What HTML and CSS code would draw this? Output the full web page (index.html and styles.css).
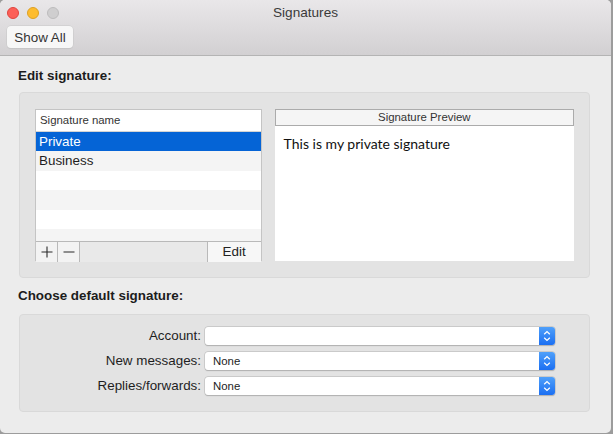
FILE: index.html
```html
<!DOCTYPE html>
<html>
<head>
<meta charset="utf-8">
<link rel="stylesheet" href="styles.css">
</head>
<body>
<div class="window">
  <div class="titlebar">
    <div class="titlerow">
      <div class="lights">
        <span class="light red"></span>
        <span class="light yellow"></span>
        <span class="light gray"></span>
      </div>
      <div class="title">Signatures</div>
    </div>
    <div class="toolbar">
      <button class="showall">Show All</button>
    </div>
  </div>
  <div class="content">
    <div class="heading">Edit signature:</div>
    <div class="group group-edit">
      <div class="table">
        <div class="thead">Signature name</div>
        <div class="rows">
          <div class="row selected">Private</div>
          <div class="row alt">Business</div>
          <div class="row"></div>
          <div class="row alt"></div>
          <div class="row"></div>
          <div class="row alt short"></div>
        </div>
        <div class="tfoot">
          <div class="sqbtn"><svg width="14" height="14" viewBox="0 0 14 14"><path d="M7 1.5V12.5M1.5 7H12.5" stroke="#2a2a2a" stroke-width="1.1" fill="none"/></svg></div>
          <div class="sqbtn"><svg width="14" height="14" viewBox="0 0 14 14"><path d="M1.5 7H12.5" stroke="#2a2a2a" stroke-width="1.1" fill="none"/></svg></div>
          <div class="spacer"></div>
          <div class="editbtn">Edit</div>
        </div>
      </div>
      <div class="preview">
        <div class="phead">Signature Preview</div>
        <div class="pbody">This is my private signature</div>
      </div>
    </div>
    <div class="heading heading2">Choose default signature:</div>
    <div class="group group-default">
      <div class="formrow">
        <div class="label">Account:</div>
        <div class="popup"><span class="pval"></span><span class="stepper"><svg width="16" height="18" viewBox="0 0 16 18"><path d="M5.2 7.2L8 4.6L10.8 7.2M5.2 10.8L8 13.4L10.8 10.8" stroke="#fff" stroke-width="1.3" fill="none"/></svg></span></div>
      </div>
      <div class="formrow">
        <div class="label">New messages:</div>
        <div class="popup"><span class="pval">None</span><span class="stepper"><svg width="16" height="18" viewBox="0 0 16 18"><path d="M5.2 7.2L8 4.6L10.8 7.2M5.2 10.8L8 13.4L10.8 10.8" stroke="#fff" stroke-width="1.3" fill="none"/></svg></span></div>
      </div>
      <div class="formrow">
        <div class="label">Replies/forwards:</div>
        <div class="popup"><span class="pval">None</span><span class="stepper"><svg width="16" height="18" viewBox="0 0 16 18"><path d="M5.2 7.2L8 4.6L10.8 7.2M5.2 10.8L8 13.4L10.8 10.8" stroke="#fff" stroke-width="1.3" fill="none"/></svg></span></div>
      </div>
    </div>
  </div>
</div>
</body>
</html>
```
FILE: styles.css
```css
* { box-sizing: border-box; }
html, body { margin: 0; padding: 0; }
body {
  background: #9c9c9c;
  width: 613px;
  height: 434px;
  overflow: hidden;
  font-family: "Liberation Sans", Arial, sans-serif;
  color: #222;
}
.window {
  width: 611px;
  height: 433px;
  background: #ececec;
  border-radius: 5px;
  overflow: hidden;
  display: flex;
  flex-direction: column;
}
.titlebar {
  height: 56px;
  background: linear-gradient(#e9e7e9, #d2d0d2);
  border-bottom: 1px solid #b4b4b4;
  display: flex;
  flex-direction: column;
}
.titlerow {
  height: 25px;
  display: flex;
  align-items: center;
  position: relative;
}
.lights {
  display: flex;
  gap: 8px;
  padding-left: 7px;
}
.light {
  width: 12px;
  height: 12px;
  border-radius: 50%;
  display: block;
}
.red { background: #fc5f57; border: 1px solid #e0443e; }
.yellow { background: #fdbc2e; border: 1px solid #dea123; }
.gray { background: #cfcecf; border: 1px solid #bdbcbd; }
.title {
  position: absolute;
  left: 0;
  right: 0;
  top: 5px;
  text-align: center;
  font-size: 13.6px;
  line-height: 16px;
  color: #3a3a3a;
}
.toolbar {
  padding-left: 7px;
  padding-top: 1px;
}
.showall {
  width: 66px;
  height: 22px;
  border: none;
  border-radius: 4px;
  background: #f7f7f7;
  box-shadow: 0 0 0 0.5px #c8c8c8, 0 1px 1px rgba(0,0,0,0.08);
  font-family: "Liberation Sans", Arial, sans-serif;
  font-size: 13.4px;
  color: #333;
  padding: 0;
}
.content {
  padding: 12px 21px 0 19px;
  display: flex;
  flex-direction: column;
}
.heading {
  font-weight: bold;
  font-size: 13.4px;
  line-height: 16px;
  color: #1c1c1c;
  margin-left: -1px;
  margin-bottom: 8px;
}
.heading2 {
  margin-top: 10px;
  margin-bottom: 10px;
}
.group {
  background: #e3e3e3;
  border: 1px solid #d9d9d9;
  border-radius: 4px;
}
.group-edit {
  height: 186px;
  display: flex;
  padding: 16px 15px 0 15px;
  gap: 13px;
}
.table {
  width: 227px;
  height: 152px;
  border: 1px solid #c4c4c4;
  background: #fff;
  display: flex;
  flex-direction: column;
}
.thead {
  height: 22px;
  border-bottom: 1px solid #d4d4d4;
  font-size: 11.4px;
  line-height: 21px;
  padding-left: 4px;
  color: #333;
  background: #fff;
}
.rows { flex: 1; display: flex; flex-direction: column; }
.row {
  height: 19px;
  font-size: 13.4px;
  line-height: 19px;
  padding-left: 3px;
  color: #1e1e1e;
  background: #fff;
}
.row.alt { background: #f4f4f4; height: 20px; }
.row.short { height: 12px; }
.row.selected { background: #0564d6; color: #fff; }
.tfoot {
  height: 21px;
  border-top: 1px solid #b9b9b9;
  background: #e9e9e9;
  display: flex;
}
.sqbtn {
  width: 22px;
  height: 20px;
  border-right: 1px solid #b9b9b9;
  display: flex;
  align-items: center;
  justify-content: center;
  background: #f3f3f3;
}
.spacer { flex: 1; }
.editbtn {
  width: 54px;
  height: 20px;
  border-left: 1px solid #b9b9b9;
  background: #f7f7f7;
  font-size: 13.4px;
  line-height: 20px;
  text-align: center;
  color: #222;
}
.preview {
  width: 300px;
  height: 152px;
  display: flex;
  flex-direction: column;
  background: #fff;
}
.phead {
  height: 17px;
  border: 1px solid #ababab;
  background: #f5f5f5;
  font-size: 11.4px;
  line-height: 15px;
  text-align: center;
  color: #333;
}
.pbody {
  flex: 1;
  padding: 10px 0 0 9px;
  font-family: Lato, "Noto Sans", sans-serif;
  font-size: 14px;
  line-height: 16px;
  color: #111;
}
.group-default {
  height: 98px;
  padding: 12px 0 0 0;
  display: flex;
  flex-direction: column;
  gap: 7px;
}
.formrow {
  display: flex;
  align-items: center;
  height: 18px;
}
.label {
  width: 183px;
  text-align: right;
  font-size: 13.4px;
  line-height: 16px;
  color: #1e1e1e;
  padding-right: 2px;
}
.popup {
  width: 350px;
  height: 18px;
  margin-left: 2px;
  background: #fff;
  border-radius: 3px;
  box-shadow: 0 0 0 0.5px #b8b8b8, 0 0.5px 1px rgba(0,0,0,0.25);
  display: flex;
  overflow: hidden;
}
.pval {
  flex: 1;
  font-size: 11.4px;
  line-height: 18px;
  padding-left: 8px;
  color: #222;
}
.stepper {
  width: 16px;
  height: 18px;
  background: linear-gradient(#4fa0fa, #1b6ff2);
  display: block;
}
.stepper svg { display: block; }
```
